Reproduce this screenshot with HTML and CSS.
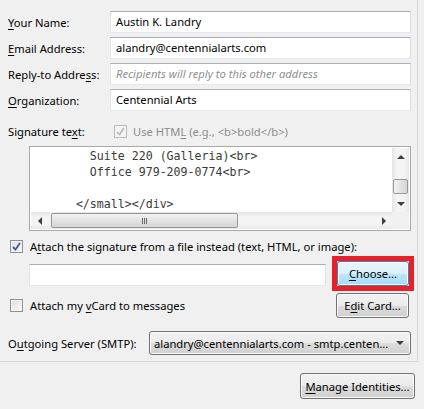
FILE: index.html
```html
<!DOCTYPE html>
<html lang="en">
<head>
  <meta charset="UTF-8">
  <title>Account Settings</title>
  <link rel="stylesheet" href="styles.css">
</head>
<body>
  <!-- Identity panel -->
  <div class="panel">
    <div class="identity">
      <label><u>Y</u>our Name:</label>
      <div class="field">Austin K. Landry</div>

      <label><u>E</u>mail Address:</label>
      <div class="field">alandry@centennialarts.com</div>

      <label>Reply-to Addre<u>s</u>s:</label>
      <div class="field placeholder">Recipients will reply to this other address</div>

      <label><u>O</u>rganization:</label>
      <div class="field">Centennial Arts</div>
    </div>

    <div class="sig-row">
      <label class="sig-label">Signature te<u>x</u>t:</label>
      <span class="check disabled">
        <svg width="9" height="9" viewBox="0 0 9 9"><path d="M1 5 L3.5 7.5 L8 1" fill="none" stroke="#b9b9b9" stroke-width="1.6"/></svg>
      </span>
      <span class="muted">Use HTM<u>L</u> (e.g., &lt;b&gt;bold&lt;/b&gt;)</span>
    </div>

    <!-- Signature text box with scrollbars -->
    <div class="sig-box">
<pre class="sig-text">        Suite 220 (Galleria)&lt;br&gt;
        Office 979-209-0774&lt;br&gt;

      &lt;/small&gt;&lt;/div&gt;</pre>
      <div class="vscroll">
        <div class="arrow"><span class="tri-up"></span></div>
        <div class="vthumb"></div>
        <div class="arrow"><span class="tri-down"></span></div>
      </div>
      <div class="hscroll">
        <div class="arrow"><span class="tri-left"></span></div>
        <div class="hthumb"><span class="grip"></span></div>
        <div class="arrow"><span class="tri-right"></span></div>
      </div>
      <div class="corner"></div>
    </div>

    <div class="check-row">
      <span class="check">
        <svg width="9" height="9" viewBox="0 0 9 9"><path d="M1 5 L3.5 7.5 L8 1" fill="none" stroke="#4a5f97" stroke-width="1.8"/></svg>
      </span>
      <span>A<u>t</u>tach the signature from a file instead (text, HTML, or image):</span>
    </div>

    <div class="file-row">
      <div class="field file-field"></div>
      <div class="highlight">
        <button class="btn btn-focus"><u>C</u>hoose...</button>
      </div>
    </div>

    <div class="vcard-row">
      <span class="check"></span>
      <span>Attach my <u>v</u>Card to messages</span>
      <button class="btn btn-edit">E<u>d</u>it Card...</button>
    </div>

    <div class="server-row">
      <label class="server-label">O<u>u</u>tgoing Server (SMTP):</label>
      <div class="btn dropdown">
        <span class="dd-text">alandry@centennialarts.com - smtp.centen...</span>
        <span class="tri-down dd-arrow"></span>
      </div>
    </div>
  </div>

  <div class="footer">
    <button class="btn btn-manage"><u>M</u>anage Identities...</button>
  </div>
</body>
</html>
```

FILE: styles.css
```css
body {
  margin: 0;
  width: 424px;
  height: 409px;
  overflow: hidden;
  background: #f0f0f0;
  font-family: "Noto Sans", "Open Sans", sans-serif;
  font-size: 11.2px;
  color: #000;
}

u {
  text-decoration: underline;
  text-underline-offset: 2px;
}

label {
  white-space: nowrap;
}

.panel {
  width: 418px;
  height: 362px;
  box-sizing: border-box;
  padding: 11px 6px 0 8px;
  border-right: 1px solid #d5d5d5;
  border-bottom: 1px solid #d5d5d5;
}

.identity {
  display: grid;
  grid-template-columns: 102px 1fr;
  row-gap: 4px;
  align-items: center;
}

.field {
  height: 22px;
  box-sizing: border-box;
  border: 1px solid;
  border-color: #abadb3 #dbdfe6 #e3e9ef #e2e3ea;
  background: #fff;
  padding: 0 5px;
  line-height: 20px;
  white-space: nowrap;
  overflow: hidden;
}

.placeholder {
  color: #8f8f8f;
  font-style: italic;
}

.sig-row {
  display: flex;
  align-items: center;
  height: 20px;
  margin-top: 10px;
}

.sig-label {
  width: 106px;
}

.muted {
  color: #8d8d8d;
  margin-left: 6px;
}

/* checkboxes */
.check {
  width: 13px;
  height: 13px;
  box-sizing: border-box;
  border: 1px solid #8e8f8f;
  background: linear-gradient(135deg, #dcdcdc, #fbfbfb);
  box-shadow: inset 0 0 0 1px #f4f4f4;
  display: flex;
  align-items: center;
  justify-content: center;
  flex: none;
}

.check.disabled {
  border-color: #bcbcbc;
  background: #f4f4f4;
}

/* signature text area */
.sig-box {
  margin: 5px 0 0 21px;
  height: 85px;
  box-sizing: border-box;
  border: 1px solid #a9a9a9;
  padding: 1px;
  background: #fff;
  display: grid;
  grid-template-columns: 1fr 17px;
  grid-template-rows: 64px 17px;
}

.sig-text {
  margin: 0;
  padding-left: 3px;
  font-family: "DejaVu Sans Mono", monospace;
  font-size: 11.6px;
  line-height: 16px;
  color: #3a3a3a;
  overflow: hidden;
}

.vscroll {
  display: flex;
  flex-direction: column;
  background: linear-gradient(90deg, #e5e5e5, #f4f4f4 30%, #f4f4f4 70%, #e8e8e8);
}

.vscroll .arrow {
  height: 17px;
}

.vthumb {
  height: 15px;
  margin: 14px 1px auto;
  box-sizing: border-box;
  border: 1px solid #979797;
  border-radius: 2px;
  background: linear-gradient(90deg, #f2f2f2, #e3e3e3 50%, #d6d6d6);
}

.hscroll {
  display: flex;
  background: linear-gradient(#e5e5e5, #f4f4f4 30%, #f4f4f4 70%, #e8e8e8);
}

.hscroll .arrow {
  width: 17px;
}

.hthumb {
  width: 187px;
  margin: 1px auto 1px 3px;
  box-sizing: border-box;
  border: 1px solid #979797;
  border-radius: 2px;
  background: linear-gradient(#f2f2f2, #e3e3e3 50%, #d6d6d6);
  display: flex;
  align-items: center;
  justify-content: center;
}

.grip {
  width: 5px;
  height: 6px;
  border-left: 1px solid #666;
  border-right: 1px solid #666;
  box-sizing: border-box;
  background: linear-gradient(90deg, transparent 1px, #666 1px, #666 2px, transparent 2px);
}

.corner {
  background: #f0f0f0;
}

.arrow {
  display: flex;
  align-items: center;
  justify-content: center;
}

.tri-up {
  border-left: 4px solid transparent;
  border-right: 4px solid transparent;
  border-bottom: 4px solid #3f3f3f;
}

.tri-down {
  border-left: 4px solid transparent;
  border-right: 4px solid transparent;
  border-top: 4px solid #3f3f3f;
}

.tri-left {
  border-top: 4px solid transparent;
  border-bottom: 4px solid transparent;
  border-right: 4px solid #3f3f3f;
}

.tri-right {
  border-top: 4px solid transparent;
  border-bottom: 4px solid transparent;
  border-left: 4px solid #3f3f3f;
}

.check-row {
  display: flex;
  align-items: center;
  gap: 7px;
  height: 16px;
  margin: 7px 0 0 2px;
}

.file-row {
  display: flex;
  align-items: flex-start;
  margin-top: 7px;
}

.file-field {
  width: 297px;
  margin: 3px 0 0 21px;
}

/* red highlight round the Choose button */
.highlight {
  display: flex;
  margin: 0 2px 0 auto;
  outline: 5px solid #e8202a;
}

/* buttons */
.btn {
  font: inherit;
  color: #000;
  height: 25px;
  box-sizing: border-box;
  border: 1px solid #707070;
  border-radius: 3px;
  background: linear-gradient(#f2f2f2, #ebebeb 50%, #dddddd 50%, #cfcfcf);
  box-shadow: inset 0 0 0 1px #fbfbfb;
  padding: 0;
  white-space: nowrap;
}

.btn-focus {
  width: 72px;
  border-color: #3c7fb1;
  background: linear-gradient(#eaf6fd, #d9f0fc 50%, #bee6fd 50%, #a7d9f5);
}

.vcard-row {
  display: flex;
  align-items: center;
  gap: 7px;
  margin: 7px 0 0 2px;
}

.btn-edit {
  width: 73px;
  margin: 0 2px 0 auto;
}

.server-row {
  display: flex;
  align-items: center;
  margin-top: 13px;
}

.server-label {
  width: 141px;
}

.dropdown {
  flex: 1;
  height: 24px;
  display: flex;
  align-items: center;
  padding: 0 6px 0 4px;
}

.dd-text {
  flex: 1;
  overflow: hidden;
}

.dd-arrow {
  margin-left: 6px;
}

.footer {
  display: flex;
  justify-content: flex-end;
  padding: 11px 9px 0 0;
}

.btn-manage {
  width: 115px;
  height: 26px;
}
```
